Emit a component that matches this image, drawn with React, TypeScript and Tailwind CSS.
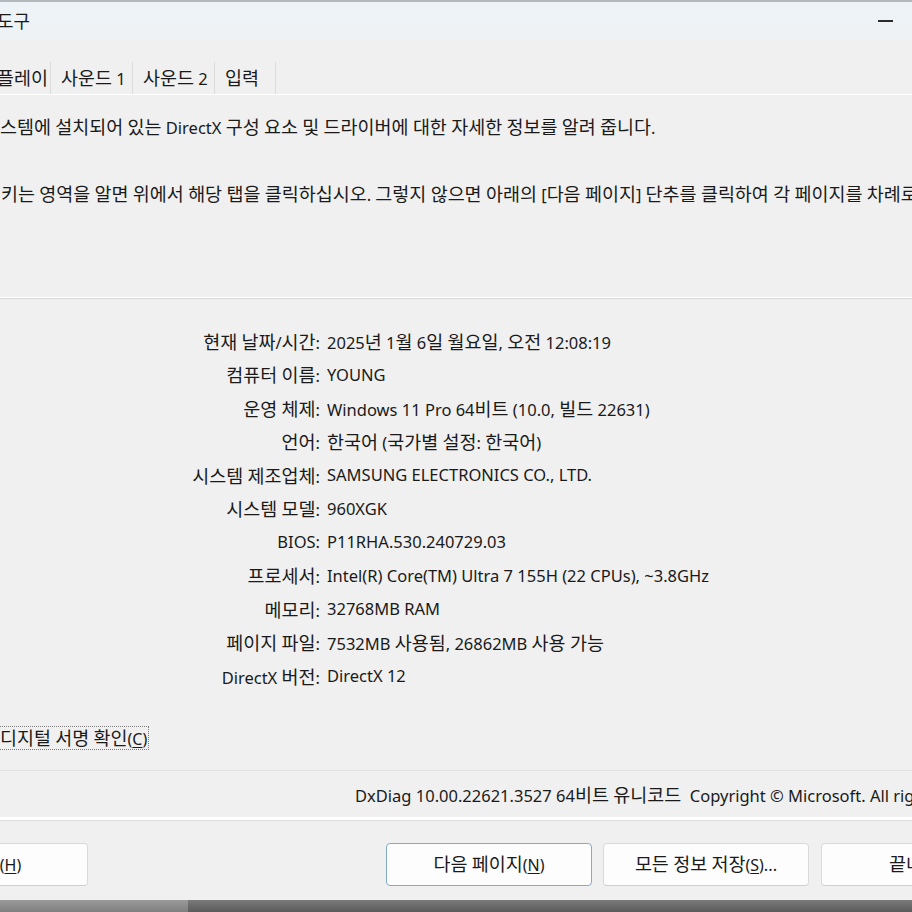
import React from "react";
import clsx from "clsx";

const rows: [string, string][] = [
  ["현재 날짜/시간:", "2025년 1월 6일 월요일, 오전 12:08:19"],
  ["컴퓨터 이름:", "YOUNG"],
  ["운영 체제:", "Windows 11 Pro 64비트 (10.0, 빌드 22631)"],
  ["언어:", "한국어 (국가별 설정: 한국어)"],
  ["시스템 제조업체:", "SAMSUNG ELECTRONICS CO., LTD."],
  ["시스템 모델:", "960XGK"],
  ["BIOS:", "P11RHA.530.240729.03"],
  ["프로세서:", "Intel(R) Core(TM) Ultra 7 155H (22 CPUs), ~3.8GHz"],
  ["메모리:", "32768MB RAM"],
  ["페이지 파일:", "7532MB 사용됨, 26862MB 사용 가능"],
  ["DirectX 버전:", "DirectX 12"],
];

// Malgun Gothic draws hangul larger than its latin letters; mimic that by
// giving hangul runs a slightly bigger size than the surrounding text
const Ko = ({ text }: { text: string }) => (
  <span>
    {text.split(/([\uAC00-\uD7A3]+)/).map((part, i) =>
      /[\uAC00-\uD7A3]/.test(part) ? (
        <span key={i} className="text-[1.12em]">
          {part}
        </span>
      ) : (
        part
      )
    )}
  </span>
);

const Key = ({ k }: { k: string }) => (
  <span className="text-[16px]">
    (<span className="underline underline-offset-2">{k}</span>)
  </span>
);

const Btn = ({
  children,
  primary = false,
  className,
}: {
  children: React.ReactNode;
  primary?: boolean;
  className?: string;
}) => (
  <div
    className={clsx(
      "h-[43px] w-[206px] shrink-0 rounded-[4px] border bg-[#fdfdfd] flex items-center justify-center text-[16.5px]",
      primary ? "border-[#86abc9]" : "border-[#dadada] border-b-[#cfcfcf]",
      className
    )}
  >
    <span>{children}</span>
  </div>
);

const Tab = ({ label, w, first = false }: { label: string; w: string; first?: boolean }) => (
  <div
    className={clsx(
      "h-full flex items-center border-r border-[#dcdcdc] shrink-0 whitespace-nowrap",
      w,
      first ? "-ml-[3px]" : "pl-[10px]"
    )}
  >
    <Ko text={label} />
  </div>
);

export default function App() {
  return (
    <div className="w-[912px] h-[912px] overflow-hidden flex flex-col bg-[#f0f0f0] text-[#1a1a1a] text-[16.5px] font-['Noto_Sans','Noto_Sans_CJK_KR',sans-serif]">
      {/* window frame top */}
      <div className="h-[2px] bg-[#b3b8bd] shrink-0" />
      <div className="h-[38px] shrink-0 flex items-center justify-between bg-gradient-to-b from-[#edf3f8] to-[#eff2f4]">
        <span className="-ml-[3px] text-[16px]">
          <Ko text="도구" />
        </span>
        <span className="mr-[19px] w-[15px] h-[1.5px] bg-[#2b2b2b]" />
      </div>

      {/* tabs */}
      <div className="mt-[22px] h-[32px] shrink-0 flex">
        <Tab label="플레이" w="w-[54px]" first />
        <Tab label="사운드 1" w="w-[82px]" />
        <Tab label="사운드 2" w="w-[82px]" />
        <Tab label="입력" w="w-[61px]" />
      </div>
      <div className="h-px bg-white shrink-0" />

      {/* description */}
      <p className="mt-[21px] h-[22px] leading-[22px] whitespace-nowrap">
        <Ko text="스템에 설치되어 있는 DirectX 구성 요소 및 드라이버에 대한 자세한 정보를 알려 줍니다." />
      </p>
      <p className="mt-[45px] h-[22px] leading-[22px] whitespace-nowrap pl-[1px]">
        <Ko text="키는 영역을 알면 위에서 해당 탭을 클릭하십시오. 그렇지 않으면 아래의 [다음 페이지] 단추를 클릭하여 각 페이지를 차례로 확인하십시오." />
      </p>

      <div className="mt-[92px] shrink-0 h-[2px] border-t border-white border-b border-b-[#d9d9d9]" />

      {/* system info */}
      <div className="mt-[26px] flex flex-col">
        {rows.map(([label, value]) => (
          <div key={label} className="h-[33.5px] flex items-center whitespace-nowrap">
            <span className="w-[320px] shrink-0 text-right">
              <Ko text={label} />
            </span>
            <span className="pl-[7px]">
              <Ko text={value} />
            </span>
          </div>
        ))}
      </div>

      {/* digital signature */}
      <div className="mt-[32px] shrink-0 flex">
        <div className="h-[24px] w-[149px] flex items-center border border-dotted border-[#7c7c7c] border-l-0 whitespace-nowrap">
          <span>
            <Ko text="디지털 서명 확인" />
            <Key k="C" />
          </span>
        </div>
      </div>

      <div className="mt-[20px] h-px bg-[#e3e3e3] shrink-0" />

      <p className="mt-[13px] h-[22px] leading-[22px] whitespace-nowrap pl-[355px]">
        <Ko text="DxDiag 10.00.22621.3527 64비트 유니코드" />
        &nbsp;&nbsp;Copyright © Microsoft. All rights reserved.
      </p>

      <div className="mt-[11px] h-[3px] bg-white shrink-0" />
      <div className="h-px bg-[#dcdcdc] shrink-0" />

      {/* buttons */}
      <div className="mt-[22px] flex shrink-0 whitespace-nowrap">
        <Btn className="-ml-[118px]">
          <Ko text="도움말" />
          <Key k="H" />
        </Btn>
        <Btn primary className="ml-[298px]">
          <Ko text="다음 페이지" />
          <Key k="N" />
        </Btn>
        <Btn className="ml-[11px]">
          <Ko text="모든 정보 저장" />
          <Key k="S" />
          ...
        </Btn>
        <Btn className="ml-[12px]">
          <Ko text="끝내기" />
          <Key k="X" />
        </Btn>
      </div>

      {/* desktop below the window */}
      <div className="mt-[14px] flex-1 flex">
        <div className="w-[188px] bg-gradient-to-b from-[#9a9a9a] to-[#7f7f7f]" />
        <div className="flex-1 bg-gradient-to-b from-[#7a7a7a] to-[#5b5b5b]" />
      </div>
    </div>
  );
}
